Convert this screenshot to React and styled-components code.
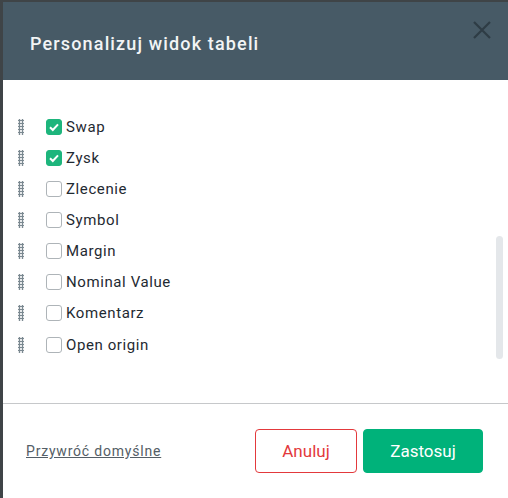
import React, { useState } from 'react'
import styled, { createGlobalStyle } from 'styled-components'

const Global = createGlobalStyle`
  html, body {
    margin: 0;
    padding: 0;
    background: #4b4f52;
    font-family: Roboto, "Liberation Sans", sans-serif;
  }
`

const Page = styled.div`
  width: 508px;
  height: 498px;
  overflow: hidden;
  display: flex;
  padding: 2px 0 0 3px;
  box-sizing: border-box;
  background: #3f4447;
`

const Modal = styled.div`
  flex: 1;
  display: flex;
  flex-direction: column;
  background: #fff;
  min-width: 0;
`

const Header = styled.div`
  height: 78px;
  background: #475a66;
  display: flex;
  align-items: flex-start;
  justify-content: space-between;
  padding: 0 14px 0 27px;
  box-sizing: border-box;
`

const Title = styled.h2`
  margin: 31px 0 0;
  font-size: 18px;
  font-weight: 500;
  letter-spacing: 1.15px;
  color: #f2f4f5;
`

const Close = styled.button`
  margin-top: 16px;
  padding: 0;
  border: none;
  background: none;
  width: 24px;
  height: 24px;
  cursor: pointer;
`

const Body = styled.div`
  height: 323px;
  position: relative;
  padding-top: 31px;
  box-sizing: border-box;
`

const List = styled.div`
  display: flex;
  flex-direction: column;
`

const Row = styled.label`
  height: 31.15px;
  display: flex;
  align-items: center;
  padding-left: 15px;
`

const Handle = styled.span`
  width: 6px;
  height: 16px;
  margin-right: 22px;
  background-image: radial-gradient(circle, #7b8991 1.25px, transparent 1.45px);
  background-size: 3px 3px;
`

const Box = styled.span`
  width: 16px;
  height: 16px;
  box-sizing: border-box;
  border-radius: 3px;
  display: flex;
  align-items: center;
  justify-content: center;
  background: ${p => (p.checked ? '#1db57c' : '#fff')};
  border: 1px solid ${p => (p.checked ? '#1db57c' : '#aeb4b8')};
  margin-right: 4px;
`

const Label = styled.span`
  font-size: 15px;
  letter-spacing: 0.6px;
  color: #1f2a32;
`

const Thumb = styled.div`
  position: absolute;
  right: 5px;
  top: 156px;
  width: 7px;
  height: 123px;
  border-radius: 4px;
  background: #e4e7ea;
`

const Footer = styled.div`
  border-top: 1px solid #c6c8ca;
  display: flex;
  align-items: center;
  justify-content: space-between;
  padding: 25px 25px 0 23px;
`

const Reset = styled.a`
  font-size: 14px;
  letter-spacing: 0.8px;
  color: #545e66;
  text-decoration: underline;
  cursor: pointer;
`

const Buttons = styled.div`
  display: flex;
  gap: 6px;
`

const Button = styled.button`
  height: 44px;
  width: ${p => p.w}px;
  border-radius: 4px;
  font-family: Roboto, "Liberation Sans", sans-serif;
  font-size: 17px;
  cursor: pointer;
  border: 1px solid ${p => (p.primary ? '#00b27a' : '#e3393c')};
  background: ${p => (p.primary ? '#00b27a' : '#fff')};
  color: ${p => (p.primary ? '#fff' : '#e3393c')};
`

const items = [
  { name: 'Swap', on: true },
  { name: 'Zysk', on: true },
  { name: 'Zlecenie', on: false },
  { name: 'Symbol', on: false },
  { name: 'Margin', on: false },
  { name: 'Nominal Value', on: false },
  { name: 'Komentarz', on: false },
  { name: 'Open origin', on: false },
]

const App = () => {
  const [cols, setCols] = useState(items)
  const toggle = i => setCols(cols.map((c, j) => (j === i ? { ...c, on: !c.on } : c)))

  return (
    <Page>
      <Global />
      <Modal>
        <Header>
          <Title>Personalizuj widok tabeli</Title>
          <Close aria-label="close">
            <svg width="24" height="24" viewBox="0 0 24 24">
              <path d="M4 4 L20 20 M20 4 L4 20" stroke="#2e3c45" strokeWidth="2.2" />
            </svg>
          </Close>
        </Header>
        <Body>
          <List>
            {cols.map((c, i) => (
              <Row key={c.name} onClick={() => toggle(i)}>
                <Handle />
                <Box checked={c.on}>
                  {c.on && (
                    <svg width="12" height="12" viewBox="0 0 12 12">
                      <path d="M2 6.2 L4.8 9 L10 3.3" fill="none" stroke="#fff" strokeWidth="2" />
                    </svg>
                  )}
                </Box>
                <Label>{c.name}</Label>
              </Row>
            ))}
          </List>
          <Thumb />
        </Body>
        <Footer>
          <Reset>Przywróć domyślne</Reset>
          <Buttons>
            <Button w={102}>Anuluj</Button>
            <Button w={120} primary>Zastosuj</Button>
          </Buttons>
        </Footer>
      </Modal>
    </Page>
  )
}

export default App
